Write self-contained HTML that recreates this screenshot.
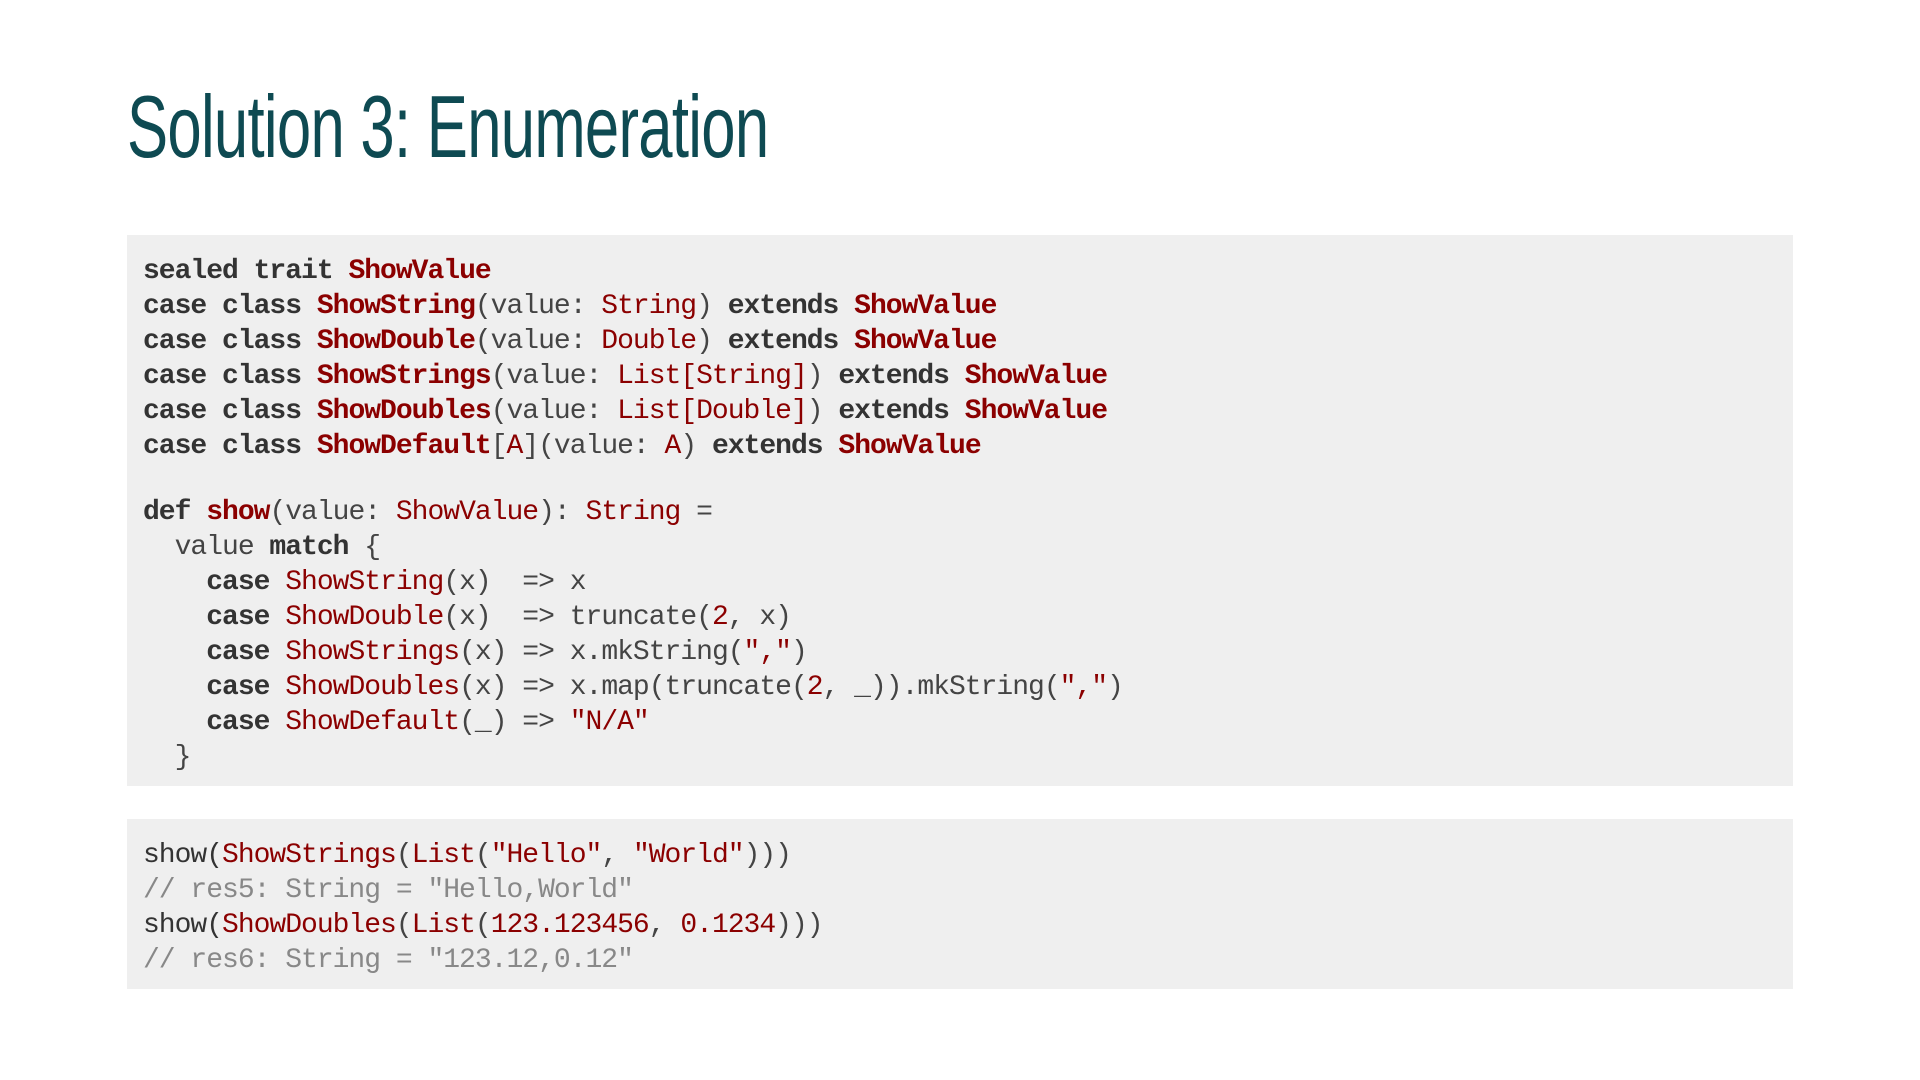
<!DOCTYPE html>
<html><head><meta charset="utf-8"><style>
html,body{margin:0;padding:0;background:#fff;width:1920px;height:1080px;overflow:hidden}
h1{position:absolute;left:127px;top:72px;margin:0;font-family:"Liberation Sans",sans-serif;font-weight:normal;font-size:88px;color:#0e4a52;line-height:110px;transform-origin:0 0;transform:scaleX(0.70);white-space:nowrap;letter-spacing:-1px}
.blk{position:absolute;left:127px;width:1666px;background:#efefef;box-sizing:border-box;padding-left:16px}
pre{margin:0;font-family:"Liberation Mono",monospace;font-size:28px;letter-spacing:-1px;line-height:35.1px;color:#444}
b{color:#333}
.t{color:#8b0000}
.T{color:#8b0000;font-weight:bold}
.c{color:#888}
.sp{height:30px}
</style></head><body>
<h1>Solution 3: Enumeration</h1>
<div class="blk" style="top:235px;height:551px;padding-top:19px">
<pre><b>sealed trait</b> <span class="T">ShowValue</span>
<b>case class</b> <span class="T">ShowString</span>(value: <span class="t">String</span>) <b>extends</b> <span class="T">ShowValue</span>
<b>case class</b> <span class="T">ShowDouble</span>(value: <span class="t">Double</span>) <b>extends</b> <span class="T">ShowValue</span>
<b>case class</b> <span class="T">ShowStrings</span>(value: <span class="t">List[String]</span>) <b>extends</b> <span class="T">ShowValue</span>
<b>case class</b> <span class="T">ShowDoubles</span>(value: <span class="t">List[Double]</span>) <b>extends</b> <span class="T">ShowValue</span>
<b>case class</b> <span class="T">ShowDefault</span>[<span class="t">A</span>](value: <span class="t">A</span>) <b>extends</b> <span class="T">ShowValue</span></pre>
<div class="sp"></div>
<pre><b>def</b> <span class="T">show</span>(value: <span class="t">ShowValue</span>): <span class="t">String</span> =
  value <b>match</b> {
    <b>case</b> <span class="t">ShowString</span>(x)  =&gt; x
    <b>case</b> <span class="t">ShowDouble</span>(x)  =&gt; truncate(<span class="t">2</span>, x)
    <b>case</b> <span class="t">ShowStrings</span>(x) =&gt; x.mkString(<span class="t">","</span>)
    <b>case</b> <span class="t">ShowDoubles</span>(x) =&gt; x.map(truncate(<span class="t">2</span>, _)).mkString(<span class="t">","</span>)
    <b>case</b> <span class="t">ShowDefault</span>(_) =&gt; <span class="t">"N/A"</span>
  }</pre>
</div>
<div class="blk" style="top:819px;height:170px;padding-top:19px">
<pre><span style="color:#333">show(</span><span class="t">ShowStrings</span>(<span class="t">List</span>(<span class="t">"Hello"</span>, <span class="t">"World"</span>)))
<span class="c">// res5: String = "Hello,World"</span>
<span style="color:#333">show(</span><span class="t">ShowDoubles</span>(<span class="t">List</span>(<span class="t">123.123456</span>, <span class="t">0.1234</span>)))
<span class="c">// res6: String = "123.12,0.12"</span></pre>
</div>
</body></html>
